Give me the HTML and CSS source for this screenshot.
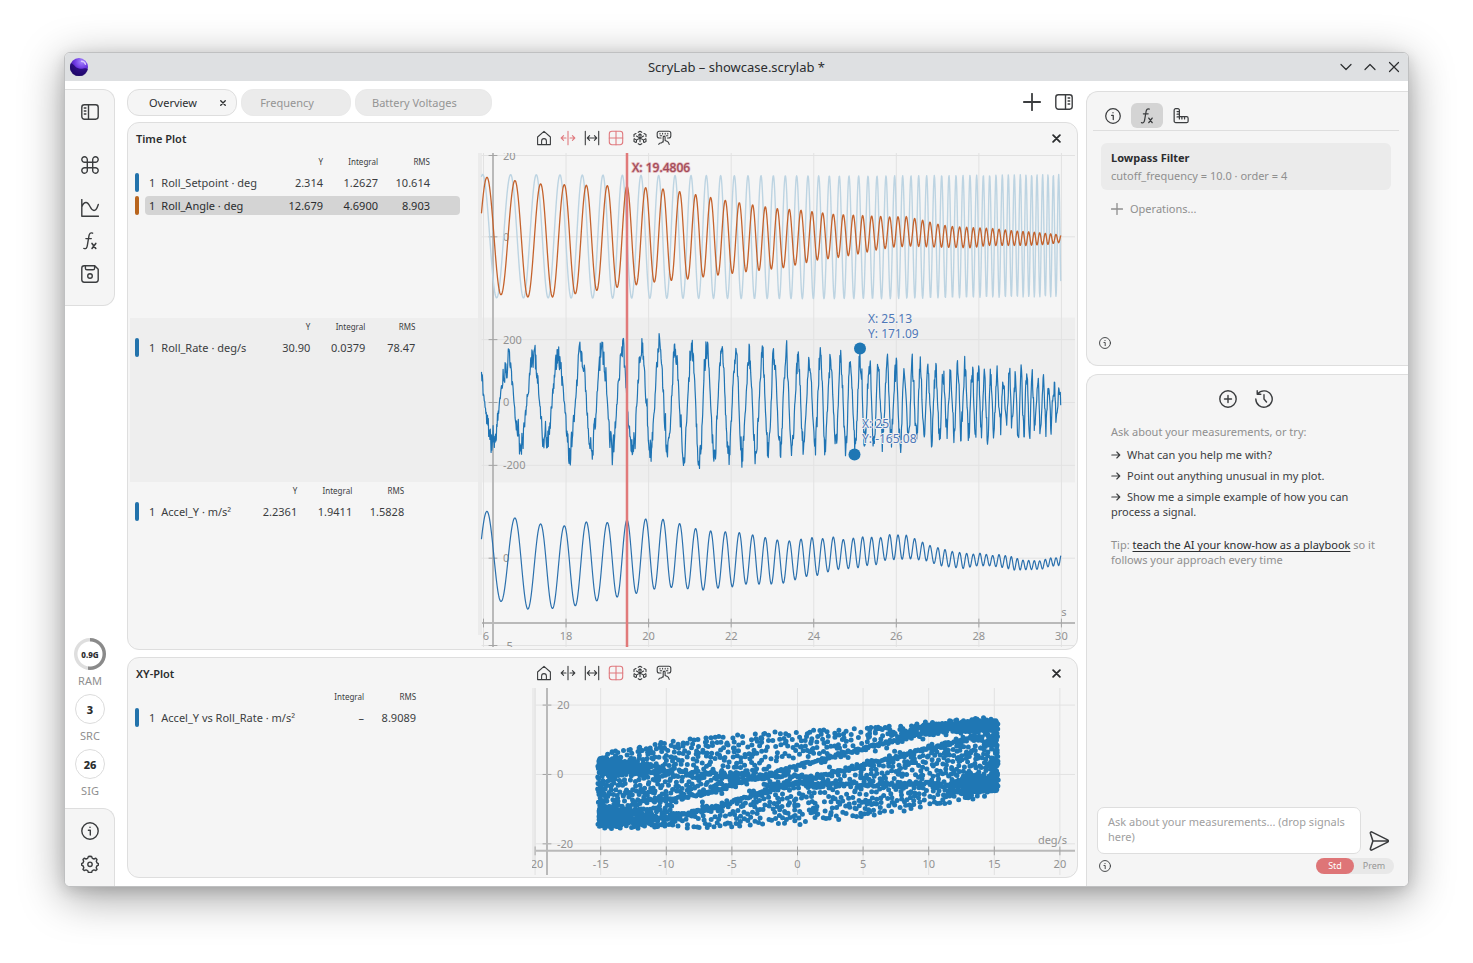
FILE: index.html
```html
<!DOCTYPE html>
<html lang="en">
<head>
<meta charset="utf-8">
<title>ScryLab – showcase.scrylab *</title>
<link rel="stylesheet" href="styles.css">
</head>
<body>
<svg class="sprite" aria-hidden="true">
  <symbol id="i-info" viewBox="0 0 18 18"><circle cx="9" cy="9" r="8.2"/><path d="M7.4 8.2H9.3V13M9 5.1v.3"/></symbol>
  <symbol id="i-fx" viewBox="0 0 18 18"><path d="M11.6 1.2C9.6.3 8.4 1.6 8 3.7L6.3 13.6C5.9 16 5 17.2 2.8 16.4M4.9 6.6h5.4"/><path class="heavy" d="M11 11.400l3.800 5M14.800 11.400l-3.800 5"/></symbol>
  <symbol id="i-close" viewBox="0 0 8 8"><path d="M1 1l6 6M7 1L1 7"/></symbol>
  <symbol id="i-home" viewBox="0 0 16 16"><path d="M1.6 7L8 1.4 14.4 7v7.6H1.6zM5.6 14.4V11a2.4 2.4 0 0 1 4.8 0v3.4"/></symbol>
  <symbol id="i-split" viewBox="0 0 16 16"><path d="M8 1.2v13.6M6 8H1.3M3.6 5.6L1.2 8l2.4 2.4M10 8h4.7M12.4 5.6L14.8 8l-2.4 2.4"/></symbol>
  <symbol id="i-width" viewBox="0 0 16 16"><path d="M1.3 1.2v13.6M14.7 1.2v13.6M3.4 8h9.2M5.6 5.7L3.3 8l2.3 2.3M10.4 5.7L12.7 8l-2.3 2.3"/></symbol>
  <symbol id="i-grid" viewBox="0 0 16 16"><rect x="1.3" y="1.3" width="13.4" height="13.4" rx="2.6"/><path d="M8 1.3v13.4M1.3 8h13.4"/></symbol>
  <symbol id="i-cube" viewBox="0 0 16 16"><path d="M6.200 2.300L8 1.300l1.800 1M12 3.500l2 1.100v2M14 9.400v2l-2 1.100M9.800 13.700L8 14.700l-1.800-1M4 12.500l-2-1.100v-2M2 6.600v-2l2-1.100M8 8V4.200M8 8l3.600-2M8 8L4.400 6M8 8v3.800M8 8l3.200 1.900M8 8l-3.200 1.900M6.500 5.200L8 3.800l1.500 1.400M2.200 8.600l2.400 1.500-.2 2M13.800 8.600l-2.400 1.500.2 2"/></symbol>
  <symbol id="i-pad" viewBox="0 0 16 16"><path d="M5 8H3.200A2 2 0 0 1 1.200 6V3.200a2 2 0 0 1 2-2h9.600a2 2 0 0 1 2 2V6a2 2 0 0 1-2 2H11.500M4 3.400v.5M6.600 3.400v.5M9.200 3.400v.5M11.800 3.400v.5M4.200 5.800h1.600M10.200 5.800h1.600M7.200 12V7.200c0-1.500 1.900-1.500 1.900 0v3.200l2.300 1c1 .4 1.400 1.600 1.800 3M7.200 11.500l-1.600 1.200c-1 .6-2.400 0-2.800 1.700"/></symbol>
  <symbol id="i-plus" viewBox="0 0 18 18"><path d="M9 .8v16.4M.8 9h16.4"/></symbol>
</svg>

<div class="window">
  <header class="titlebar">
    <svg class="logo" viewBox="0 0 18 18">
      <defs><radialGradient id="orb" cx=".65" cy=".2" r=".9"><stop offset="0" stop-color="#a684ff"/><stop offset=".45" stop-color="#6a35e0"/><stop offset="1" stop-color="#1d0660"/></radialGradient></defs>
      <circle cx="9" cy="9" r="9" fill="url(#orb)"/>
      <path d="M1 5.2C4 6 5 9.500 9 10.500s6-1.500 8.800.5A9 9 0 1 1 1 5.200z" fill="#1b0466" opacity=".75"/>
      <path d="M11.500 3.200c2 0 3.500 1.300 4 3" fill="none" stroke="#d9c8ff" stroke-width="1.400" stroke-linecap="round"/>
    </svg>
    <h1 class="window-title">ScryLab – showcase.scrylab *</h1>
    <div class="window-controls">
      <button aria-label="Minimize"><svg viewBox="0 0 12 12"><path d="M1 3.500l5 5 5-5"/></svg></button>
      <button aria-label="Maximize"><svg viewBox="0 0 12 12"><path d="M1 8.500l5-5 5 5"/></svg></button>
      <button aria-label="Close"><svg viewBox="0 0 12 12"><path d="M1.500 1.500l9 9M10.500 1.500l-9 9"/></svg></button>
    </div>
  </header>

  <div class="workspace">
    <nav class="rail">
      <div class="rail-top">
        <button class="rail-panel" aria-label="Toggle sidebar"><svg class="icon" viewBox="0 0 18 18"><rect x=".8" y="1.800" width="16.400" height="14.400" rx="2.600"/><path d="M7.500 1.800v14.400M3.300 5h1.600M3.300 8h1.600M3.300 11h1.600"/></svg></button>
        <button class="rail-command" aria-label="Commands"><svg class="icon" viewBox="0 0 18 18"><path d="M6.300 6.300H3.600A2.750 2.750 0 1 1 6.300 3.600v10.800A2.750 2.750 0 1 1 3.600 11.700h10.800A2.750 2.750 0 1 1 11.700 14.400V3.600A2.750 2.750 0 1 1 14.400 6.300z"/></svg></button>
        <button aria-label="Plots"><svg class="icon" viewBox="0 0 18 18"><path d="M.8.500v16.700h16.700M.8 8C2 4.500 3.500 3.500 5 3.500c4 0 4 8 8 8 2.200 0 3.200-2.500 4.300-6"/></svg></button>
        <button aria-label="Functions"><svg class="icon"><use href="#i-fx"/></svg></button>
        <button aria-label="Save"><svg class="icon" viewBox="0 0 18 18"><path d="M3.200.8h10.600l3.400 3.400v10.600a2.400 2.400 0 0 1-2.400 2.400H3.200a2.400 2.400 0 0 1-2.400-2.400V3.200A2.400 2.400 0 0 1 3.200.8zM4.400 1v2.200c0 1 .6 1.600 1.600 1.600h6c1 0 1.600-.6 1.600-1.600V1"/><circle cx="9" cy="11" r="2.300"/></svg></button>
      </div>
      <div class="rail-stats">
        <div class="stat"><span class="stat-ring stat-ram">0.9G</span><span class="stat-name">RAM</span></div>
        <div class="stat"><span class="stat-ring">3</span><span class="stat-name">SRC</span></div>
        <div class="stat"><span class="stat-ring">26</span><span class="stat-name">SIG</span></div>
      </div>
      <div class="rail-bottom">
        <button aria-label="About"><svg class="icon"><use href="#i-info"/></svg></button>
        <button aria-label="Settings"><svg class="icon" viewBox="0 0 18 18"><path d="M9 1.300l1.600.2.700 1.800 1.700.7 1.800-.8 1.200 1.200-.7 1.900.7 1.600 1.400.7v1.600l-1.600.8-.6 1.700.8 1.700-1.200 1.200-1.800-.7-1.700.7-.7 1.800H7.400l-.7-1.800-1.700-.7-1.800.7L2 14.400l.8-1.700-.6-1.700-1.600-.8V8.600L2 7.900l.7-1.600L2 4.400l1.200-1.200L5 4l1.700-.7.700-1.800z"/><circle cx="9" cy="9.300" r="2.200"/></svg></button>
      </div>
    </nav>

    <main class="main">
      <div class="tabs">
        <div class="tab tab-active"><button class="tab-label">Overview</button><button class="tab-close" aria-label="Close tab"><svg><use href="#i-close"/></svg></button></div>
        <div class="tab"><button class="tab-label">Frequency</button></div>
        <div class="tab"><button class="tab-label">Battery Voltages</button></div>
        <div class="tab-actions">
          <button aria-label="Add tab"><svg class="icon icon-plus"><use href="#i-plus"/></svg></button>
          <button aria-label="Toggle inspector"><svg class="icon" viewBox="0 0 18 18"><rect x=".8" y="1.800" width="16.400" height="14.400" rx="2.600"/><path d="M10.500 1.800v14.400M13.100 5h1.600M13.100 8h1.600M13.100 11h1.600"/></svg></button>
        </div>
      </div>

      <section class="panel panel-time">
        <header class="panel-head">
          <h2>Time Plot</h2>
          <div class="tools">
            <button aria-label="Home"><svg><use href="#i-home"/></svg></button>
            <button class="on" aria-label="Cursor"><svg><use href="#i-split"/></svg></button>
            <button aria-label="Fit width"><svg><use href="#i-width"/></svg></button>
            <button class="on" aria-label="Grid"><svg><use href="#i-grid"/></svg></button>
            <button aria-label="Freeze"><svg><use href="#i-cube"/></svg></button>
            <button aria-label="Inspect"><svg><use href="#i-pad"/></svg></button>
          </div>
          <button class="panel-close" aria-label="Close panel"><svg><use href="#i-close"/></svg></button>
        </header>
        <div class="panel-body">
          <div class="signals">
            <div class="signal-group">
              <table>
                <thead><tr><th></th><th></th><th></th><th class="c-y">Y</th><th class="c-int">Integral</th><th class="c-rms">RMS</th><th class="c-end"></th></tr></thead>
                <tbody>
                  <tr><td><i class="swatch"></i></td><td class="c-n">1</td><td>Roll_Setpoint · deg</td><td>2.314</td><td>1.2627</td><td>10.614</td><td></td></tr>
                  <tr class="selected"><td><i class="swatch swatch-orange"></i></td><td class="c-n">1</td><td>Roll_Angle · deg</td><td>12.679</td><td>4.6900</td><td>8.903</td><td></td></tr>
                </tbody>
              </table>
            </div>
            <div class="signal-group shaded">
              <table>
                <thead><tr><th></th><th></th><th></th><th class="c-y c-narrow">Y</th><th class="c-int">Integral</th><th class="c-rms c-tight">RMS</th></tr></thead>
                <tbody><tr><td><i class="swatch"></i></td><td class="c-n">1</td><td>Roll_Rate · deg/s</td><td>30.90</td><td>0.0379</td><td>78.47</td></tr></tbody>
              </table>
            </div>
            <div class="signal-group">
              <table>
                <thead><tr><th></th><th></th><th></th><th class="c-y">Y</th><th class="c-int">Integral</th><th class="c-rms">RMS</th></tr></thead>
                <tbody><tr><td><i class="swatch"></i></td><td class="c-n">1</td><td>Accel_Y · m/s²</td><td>2.2361</td><td>1.9411</td><td>1.5828</td></tr></tbody>
              </table>
            </div>
          </div>
          <div class="chart" id="time-chart"></div>
        </div>
      </section>

      <section class="panel panel-xy">
        <header class="panel-head">
          <h2>XY-Plot</h2>
          <div class="tools">
            <button aria-label="Home"><svg><use href="#i-home"/></svg></button>
            <button aria-label="Cursor"><svg><use href="#i-split"/></svg></button>
            <button aria-label="Fit width"><svg><use href="#i-width"/></svg></button>
            <button class="on" aria-label="Grid"><svg><use href="#i-grid"/></svg></button>
            <button aria-label="Freeze"><svg><use href="#i-cube"/></svg></button>
            <button aria-label="Inspect"><svg><use href="#i-pad"/></svg></button>
          </div>
          <button class="panel-close" aria-label="Close panel"><svg><use href="#i-close"/></svg></button>
        </header>
        <div class="panel-body">
          <div class="signals signals-wide">
            <div class="signal-group">
              <table>
                <thead><tr><th></th><th></th><th></th><th class="c-wide">Integral</th><th class="c-rms">RMS</th></tr></thead>
                <tbody><tr><td><i class="swatch"></i></td><td class="c-n">1</td><td>Accel_Y vs Roll_Rate · m/s²</td><td>–</td><td>8.9089</td></tr></tbody>
              </table>
            </div>
          </div>
          <div class="chart" id="xy-chart"></div>
        </div>
      </section>
    </main>

    <aside class="side">
      <section class="inspector">
        <div class="inspector-tabs">
          <button aria-label="Details"><svg class="icon"><use href="#i-info"/></svg></button>
          <button class="current" aria-label="Operations"><svg class="icon"><use href="#i-fx"/></svg></button>
          <button aria-label="Measure"><svg class="icon" viewBox="0 0 18 18"><path d="M3 .8h2.500A1.700 1.700 0 0 1 7.200 2.500v7.300h8.100A1.700 1.700 0 0 1 17 11.500v3.300a1.700 1.700 0 0 1-1.700 1.700H3.200A1.900 1.900 0 0 1 1.300 14.600V2.500A1.700 1.700 0 0 1 3 .8zM4.600 4H7M4.600 7H7M4.600 10h2.600M10 9.800v2.500M13 9.800v2.500M7.200 9.800v2.500"/></svg></button>
        </div>
        <div class="op-card"><h3>Lowpass Filter</h3><p>cutoff_frequency = 10.0 · order = 4</p></div>
        <button class="op-add"><svg class="icon"><use href="#i-plus"/></svg>Operations...</button>
        <button class="hint" aria-label="Help"><svg class="icon"><use href="#i-info"/></svg></button>
      </section>

      <section class="chat">
        <div class="chat-actions">
          <button aria-label="New chat"><svg class="icon" viewBox="0 0 18 18"><circle cx="9" cy="9" r="8.200"/><path d="M9 5.500v7M5.500 9h7"/></svg></button>
          <button aria-label="History"><svg class="icon" viewBox="0 0 18 18"><path d="M2.700 3.800A8.200 8.200 0 1 1 .8 9M2.200.8v3.400h3.600M9 4.800V9l2.500 3"/></svg></button>
        </div>
        <div class="chat-intro">
          <p class="muted">Ask about your measurements, or try:</p>
          <button class="prompt"><svg viewBox="0 0 10 8"><path d="M.8 4h8M5.800 1l3 3-3 3"/></svg>What can you help me with?</button>
          <button class="prompt"><svg viewBox="0 0 10 8"><path d="M.8 4h8M5.800 1l3 3-3 3"/></svg>Point out anything unusual in my plot.</button>
          <button class="prompt"><svg viewBox="0 0 10 8"><path d="M.8 4h8M5.800 1l3 3-3 3"/></svg>Show me a simple example of how you can process a signal.</button>
          <p class="muted tip">Tip: <a href="#playbook">teach the AI your know-how as a playbook</a> so it follows your approach every time</p>
        </div>
        <form class="composer">
          <textarea aria-label="Message" placeholder="Ask about your measurements... (drop signals here)"></textarea>
          <button type="button" class="send" aria-label="Send"><svg class="icon" viewBox="0 0 18 18"><path d="M1.300 2.200C1 1 1.800.5 2.800 1l14 7c.9.500.9 1.500 0 2l-14 7c-1 .5-1.800 0-1.500-1.200L3.500 9zM3.500 9H17"/></svg></button>
        </form>
        <div class="chat-foot">
          <button aria-label="Help"><svg class="icon"><use href="#i-info"/></svg></button>
          <div class="tier"><button class="tier-on">Std</button><button>Prem</button></div>
        </div>
      </section>
    </aside>
  </div>
</div>
<script src="charts.js"></script>
</body>
</html>
```
FILE: styles.css
```css
* { box-sizing: border-box; }

body {
  margin: 0;
  height: 100vh;
  min-height: 700px;
  padding: 52px 64px 76px;
  background: #fff;
  color: #3b3d3f;
  font: 11px/15px "Noto Sans", "Open Sans", sans-serif;
  overflow: hidden;
}

h1, h2, h3, p { margin: 0; font-size: inherit; }

button {
  padding: 0;
  border: 0;
  background: none;
  color: inherit;
  font: inherit;
  display: flex;
  align-items: center;
  justify-content: center;
}

svg { display: block; fill: none; stroke: currentColor; stroke-width: 1.3; stroke-linecap: round; stroke-linejoin: round; }
.sprite { position: absolute; width: 0; height: 0; }
.icon { width: 18px; height: 18px; stroke-width: 1.4; flex: none; }
.heavy { stroke-width: 1.6; }

.window {
  height: 100%;
  display: flex;
  flex-direction: column;
  background: #fff;
  border: 1px solid #bfc0c1;
  border-radius: 6px;
  overflow: hidden;
  box-shadow: 0 10px 44px rgba(0, 0, 0, .38), 0 4px 14px rgba(0, 0, 0, .12);
}

.titlebar {
  flex: none;
  height: 28px;
  display: grid;
  grid-template-columns: 1fr auto 1fr;
  align-items: center;
  padding: 0 5px;
  background: #dee0e2;
}
.logo { width: 18px; height: 18px; stroke: none; }
.window-title { font-size: 13px; line-height: 18px; font-weight: 400; color: #2b2d2f; }
.window-controls { justify-self: end; display: flex; gap: 12px; padding-right: 3px; }
.window-controls svg { width: 12px; height: 12px; stroke-width: 1.2; color: #2b2d2f; }

.workspace { flex: 1; min-height: 0; display: flex; }

.rail { width: 50px; flex: none; display: flex; flex-direction: column; padding-top: 8px; }
.rail-top, .rail-bottom { background: #f5f5f5; border: 1px solid #dedede; border-left: 0; display: flex; flex-direction: column; align-items: center; }
.rail-top { border-radius: 0 12px 12px 0; height: 217px; padding-top: 13px; }
.rail-top button + button { margin-top: 15px; }
.rail-top .rail-command { margin-top: 35px; margin-bottom: 10px; }
.rail-bottom { border-radius: 0 12px 0 0; border-bottom: 0; height: 78px; padding-top: 13px; gap: 15px; }
.rail-stats { flex: 1; display: flex; flex-direction: column; justify-content: flex-end; gap: 6px; padding-bottom: 10px; }
.stat { display: flex; flex-direction: column; align-items: center; gap: 4px; }
.stat-ring {
  width: 30px; height: 30px;
  border: 1px solid #dcdcdc;
  border-radius: 50%;
  display: flex; align-items: center; justify-content: center;
  font-weight: 800;
  color: #2b2d2f;
}
.stat-ram {
  width: 32px; height: 32px;
  margin-bottom: -1px;
  border: 0;
  font-size: 8px;
  background: radial-gradient(circle, #fff 12px, transparent 13px), conic-gradient(#8a8a8a 52%, #dedede 0);
}
.stat-name { color: #8f8f8f; }

.main { flex: 1; min-width: 0; display: flex; flex-direction: column; padding: 8px 8px 8px 12px; }

.tabs { display: flex; gap: 4px; height: 27px; margin-bottom: 6px; flex: none; }
.tab { min-width: 110px; display: flex; padding: 0 26px 0 8px; border: 1px solid #e9e9e9; border-radius: 12px; background: #ebebeb; color: #949494; }
.tab-label { flex: 1; padding: 0 8px; white-space: nowrap; }
.tab-active { background: #f5f5f5; border-color: #dedede; color: #2b2d2f; padding-right: 0; }
.tab-close { width: 26px; }
.tab-close svg { width: 6px; height: 6px; stroke-width: 1.8; }
.tab-actions { margin-left: auto; display: flex; gap: 14px; padding: 0 5px 2px 0; }
.icon-plus { stroke-width: 1.8; }

.panel { display: flex; flex-direction: column; min-height: 0; background: #f5f5f5; border: 1px solid #dedede; border-radius: 12px; overflow: hidden; }
.panel-time { flex: 529 1 0; margin-bottom: 7px; }
.panel-xy { flex: 220 1 0; }
.panel-head { flex: none; height: 30px; display: grid; grid-template-columns: 1fr auto 1fr; align-items: center; padding: 0 16px 0 8px; }
.panel-head h2 { font-weight: 600; color: #2b2d2f; }
.tools { display: flex; gap: 8px; padding-left: 10px; }
.tools svg { width: 16px; height: 16px; stroke-width: 1.1; }
.tools .on { color: #e07a7f; }
.panel-close { justify-self: end; }
.panel-close svg { width: 9px; height: 9px; stroke-width: 1.6; color: #2b2d2f; }
.panel-body { flex: 1; min-height: 0; display: flex; padding: 0 2px 2px; }
.signals { flex: none; width: 348px; display: flex; flex-direction: column; }
.signals-wide { width: 402px; }
.signal-group { flex: 1; padding: 0 5px; }
.shaded { background: #eee; }
.chart { flex: 1; min-width: 0; overflow: hidden; }

table { border-collapse: separate; border-spacing: 0 4px; }
th { height: 12px; padding: 0; font-size: 8px; line-height: 10px; font-weight: 400; text-align: right; vertical-align: top; }
td { height: 19px; padding: 0; text-align: right; white-space: nowrap; }
td:nth-child(3) { text-align: left; }
td:first-child { width: 10px; }
.c-n { width: 16px; padding-left: 4px; padding-right: 6px; }
.c-y { width: 66px; }
.c-narrow { width: 64px; }
.c-int { width: 55px; }
.c-wide { width: 69px; }
.c-rms { width: 52px; }
.c-tight { width: 50px; }
.c-end { width: 30px; }
.swatch { display: block; width: 4px; height: 19px; border-radius: 2px; background: #2272ab; }
.swatch-orange { background: #b8641d; }
.selected td { background: #d4d4d4; color: #2b2d2f; }
.selected td:first-child { background: none; }
.selected .c-n { border-radius: 4px 0 0 4px; }
.selected td:last-child { border-radius: 0 4px 4px 0; }

.side { flex: none; width: 322px; display: flex; flex-direction: column; padding-top: 10px; gap: 8px; }
.inspector, .chat { background: #f5f5f5; border: 1px solid #dedede; border-right: 0; display: flex; flex-direction: column; }
.inspector { height: 275px; border-radius: 12px 0 0 12px; padding: 11px 9px 16px 6px; align-items: flex-start; }
.inspector-tabs { align-self: stretch; display: flex; gap: 2px; padding-left: 4px; height: 28px; border-bottom: 1px solid #dedede; }
.inspector-tabs button { width: 32px; height: 25px; border-radius: 6px; }
.inspector-tabs .icon { width: 16px; height: 16px; }
.inspector-tabs .current { background: #d4d4d4; }
.op-card { align-self: stretch; margin: 12px 8px 0; padding: 7px 10px; height: 47px; border-radius: 6px; background: #ebebeb; }
.op-card h3 { color: #2b2d2f; font-weight: 700; margin-bottom: 3px; }
.op-card p { color: #8f8f8f; }
.op-add { margin: 11px 0 0 18px; gap: 7px; color: #8f8f8f; }
.op-add .icon { width: 12px; height: 12px; stroke-width: 2; }
.hint { margin: auto 0 0 6px; }
.hint .icon, .chat-foot .icon { width: 12px; height: 12px; }

.chat { flex: 1; min-height: 0; border-bottom: 0; border-radius: 12px 0 0 0; padding: 15px 14px 12px 10px; }
.chat-actions { display: flex; justify-content: center; gap: 18px; }
.chat-intro { display: flex; flex-direction: column; gap: 6px; padding: 16px 18px 0 14px; }
.chat-intro .muted + .prompt { margin-top: 2px; }
.muted { color: #8f8f8f; }
.prompt { display: block; text-align: left; }
.prompt svg { display: inline-block; width: 10px; height: 8px; margin-right: 6px; stroke-width: 1.1; }
.tip { margin-top: 12px; }
.tip a { color: #2b2d2f; text-underline-offset: 2px; text-decoration-skip-ink: none; }
.composer { margin-top: auto; display: flex; align-items: flex-end; gap: 8px; padding-right: 5px; }
textarea { flex: 1; min-width: 0; height: 47px; resize: none; padding: 6px 10px; border: 1px solid #dedede; border-radius: 7px; background: #fff; color: #2b2d2f; font: inherit; overflow: hidden; }
textarea::placeholder { color: #a0a0a0; opacity: 1; }
.send { height: 26px; }
.send .icon { width: 20px; height: 20px; }
.chat-foot { display: flex; align-items: center; justify-content: space-between; padding: 4px 0 0 2px; }
.tier { display: flex; height: 16px; border-radius: 8px; background: #e8e8e8; color: #969696; font-size: 9px; line-height: 12px; }
.tier button { width: 40px; }
.tier .tier-on { width: 38px; border-radius: 8px; background: #de7577; color: #fff; }

.grid { stroke: #e2e2e2; stroke-width: 1; }
.axis { stroke: #b9b9b9; stroke-width: 2; stroke-linecap: butt; }
.axis-thin { stroke: #a4a4a4; stroke-width: 1; }
.tick { fill: #929292; stroke: none; font-size: 11px; }
.tick-mid { text-anchor: middle; }
.tick-end { text-anchor: end; }
.band { fill: #eee; stroke: none; }
.gutter { fill: #ebebeb; stroke: none; }
.trace { stroke: #2b70ad; stroke-width: 1.2; }
.trace-rate { stroke: #1f74b4; stroke-width: 1.2; }
.trace-set { stroke: #bdd4e2; stroke-width: 1.4; }
.trace-angle { stroke: #c4622c; stroke-width: 1.3; }
.cursor { stroke: #e17a7a; stroke-width: 2.5; }
.cursor-label { fill: #a04a58; stroke: #e3b0b4; stroke-width: 1.5; paint-order: stroke; font-size: 12px; font-weight: 500; }
.mark { fill: #1f77b4; stroke: none; }
.mark-label { fill: #4f78b8; stroke: #f2f2f2; stroke-width: 2; paint-order: stroke; font-size: 12px; }
.cloud { stroke: #1f77b4; stroke-width: 5; }
```
FILE: charts.js
```js
const NS = 'http://www.w3.org/2000/svg';

function random(seed) {
  return () => {
    seed = (seed * 1664525 + 1013904223) % 4294967296;
    return seed / 4294967296;
  };
}

function surface(host, baseW, baseH) {
  host.textContent = '';
  const w = host.clientWidth, h = host.clientHeight;
  const svg = document.createElementNS(NS, 'svg');
  svg.setAttribute('width', w);
  svg.setAttribute('height', h);
  host.append(svg);
  const add = (tag, cls, attrs, text) => {
    const el = document.createElementNS(NS, tag);
    el.setAttribute('class', cls);
    for (const k in attrs) el.setAttribute(k, attrs[k]);
    if (text !== undefined) el.textContent = text;
    svg.append(el);
  };
  const X = v => v * w / baseW, Y = v => v * h / baseH;
  return {
    w, h, X, Y, add,
    line: (cls, x1, y1, x2, y2) => add('line', cls, { x1, y1, x2, y2 }),
    text: (cls, x, y, t) => add('text', cls, { x, y }, t)
  };
}

function lerp(points, x) {
  if (x <= points[0][0]) return points[0][1];
  for (let i = 1; i < points.length; i++) {
    const [x0, y0] = points[i - 1], [x1, y1] = points[i];
    if (x <= x1) return y0 + (y1 - y0) * (x - x0) / (x1 - x0);
  }
  return points[points.length - 1][1];
}

/* Oscillation whose crests sit at the given x values: its middle, reach and phase at x. */
function wave(peaks, top, bottom, x) {
  let i = 0;
  while (i < peaks.length - 2 && peaks[i + 1] < x) i++;
  const phase = (x - peaks[i]) / (peaks[i + 1] - peaks[i]);
  const hi = lerp(top, x), lo = lerp(bottom, x);
  return { mid: (hi + lo) / 2, reach: (hi - lo) / 2, cos: Math.cos(phase * 2 * Math.PI) };
}

const third = (list, off) => list.map(v => v / 3 + off);
const pairs = (list, off, dy) => {
  const out = [];
  for (let i = 0; i < list.length; i += 2) out.push([list[i] / 3 + off, list[i + 1] / 3 + dy]);
  return out;
};

const setPeaks = [...third([-50, 38, 122, 199, 270, 337, 399, 457, 513, 566, 615, 663, 709, 752, 793, 834, 873, 910], -8),
  ...third([16, 50, 84, 116, 148, 178, 207, 236, 264, 291, 318, 344, 368, 393, 416, 440, 463, 485, 507, 528, 549, 570, 590, 610, 629, 648, 667, 685, 703, 721, 738, 755, 771, 788, 804, 820, 836, 852], 302)];
const anglePeaks = [...third([-38, 51, 135, 212, 283, 349, 412, 471, 527, 579, 629, 677, 722, 766, 808, 848, 886, 922], -8),
  ...third([28, 63, 96, 128, 160, 190, 220, 248, 275, 302, 329, 354, 379, 404, 428, 450, 474, 495, 517, 539, 560, 580, 600, 619, 638, 657, 676, 694, 712, 729, 746, 763, 779, 796, 812, 828, 844, 860], 302)];
const ratePeaks = [...third([-65, 22, 112, 190, 265, 333, 396, 457, 515, 568, 616, 665, 711, 755, 797, 837, 877, 912], -8),
  ...third([18, 54, 88, 121, 151, 183, 211, 240, 268, 295, 321, 347, 374, 397, 421, 443, 467, 490, 512, 533, 555, 577, 595, 613, 632, 651, 670, 688, 706, 723, 740, 757, 773, 790, 806, 822, 838, 854], 302)];

const setTop = [[0, 21.500], [200, 22.500], [400, 23], [580, 21.500]];
const setBottom = [[0, 145], [300, 146], [400, 146], [580, 144]];
const angleTop = [...pairs([51, 172, 135, 182, 212, 192, 349, 196, 471, 198, 527, 203, 579, 207, 629, 215, 677, 224, 766, 241, 848, 255, 922, 266], -8, -33),
  ...pairs([63, 271, 160, 283, 248, 287, 329, 291, 379, 290, 428, 301, 474, 313, 517, 320, 638, 326, 694, 332, 763, 337, 842, 345], 302, -33)];
const angleBottom = [...pairs([94, 525, 173, 532, 248, 532, 317, 522, 381, 512, 441, 503, 499, 495, 553, 487, 653, 478, 744, 466, 828, 456, 905, 448], -8, -33),
  ...pairs([12, 444, 46, 436, 112, 421, 175, 413, 233, 403, 288, 391, 342, 382, 391, 379, 460, 382, 570, 384, 628, 377, 738, 377, 803, 374, 840, 368], 302, -33)];
const accelTop = [...pairs([51, 396, 135, 416, 212, 434, 283, 440, 349, 428, 412, 430, 471, 422, 527, 419, 579, 420, 629, 433, 677, 448, 722, 455, 808, 460, 848, 467, 922, 482], -8, 227),
  ...pairs([28, 485, 96, 475, 128, 478, 160, 473, 190, 481, 248, 473, 302, 475, 329, 466, 379, 468, 404, 478, 450, 499, 517, 517, 580, 525, 600, 522, 638, 529, 657, 526, 694, 532, 729, 543, 779, 545, 812, 536, 828, 536, 842, 526], 302, 227)];
const accelBottom = [...pairs([94, 667, 173, 690, 248, 688, 317, 680, 381, 665, 441, 654, 499, 643, 553, 630, 604, 625, 700, 633, 744, 627, 787, 623, 828, 615, 905, 615], -8, 227),
  ...pairs([12, 612, 46, 602, 80, 592, 112, 589, 144, 578, 175, 571, 233, 566, 261, 559, 288, 557, 316, 543, 391, 539, 439, 545, 483, 560, 549, 568, 590, 560, 628, 560, 668, 565, 703, 573, 787, 570, 803, 563, 835, 559], 302, 227)];
const rateTop = [...pairs([25, 735, 110, 725, 190, 705, 265, 708, 333, 690, 396, 700, 457, 692, 515, 690, 568, 678, 616, 695, 711, 680, 755, 687, 837, 708, 912, 708], -8, -33),
  ...pairs([18, 715, 88, 712, 151, 704, 184, 720, 240, 718, 295, 743, 347, 725, 397, 745, 443, 755, 512, 762, 555, 745, 577, 762, 635, 770, 740, 768, 838, 784], 302, -33)];
const rateBottom = [...pairs([72, 182, 155, 200, 230, 205, 302, 210, 428, 210, 487, 220, 538, 215, 594, 220, 640, 240, 691, 240, 735, 218, 776, 230, 857, 218, 927, 218], -8, 227),
  ...pairs([2, 220, 71, 210, 139, 205, 197, 200, 253, 188, 386, 188, 434, 168, 520, 155, 632, 155, 716, 157, 785, 148, 820, 138, 838, 120], 302, 227)];

function drawTime() {
  const s = surface(document.getElementById('time-chart'), 597, 495);
  const { X, Y, w, h } = s;
  s.add('rect', 'band', { x: 0, y: Y(165), width: w, height: Y(165) });
  s.add('rect', 'gutter', { x: 0, y: 0, width: 4, height: Y(483) });
  for (let t = 16; t <= 30; t += 2) s.line('grid', X(5.500 + (t - 16) * 41.280), 0, X(5.500 + (t - 16) * 41.280), h);
  const rows = [[2.500, '20'], [84, '0'], [187, '200'], [250, '0'], [313, '-200'], [406, '0'], [493.500, '-5']];
  rows.forEach(([y]) => s.line('grid', 4, Y(y), w, Y(y)));
  s.line('axis', X(15), 0, X(15), h);
  rows.forEach(([y, label]) => {
    s.line('axis-thin', X(15) - 4, Y(y), X(15) + 4, Y(y));
    s.text('tick', X(15) + 10, Y(y) + 4, label);
  });
  s.line('axis', 4, Y(471), w, Y(471));
  for (let t = 16; t <= 30; t += 2) {
    const x = X(5.500 + (t - 16) * 41.280);
    s.line('axis-thin', x, Y(471) - 4, x, Y(471) + 4);
    s.text('tick tick-mid', t === 16 ? 8 : x, Y(488), t === 16 ? '6' : t);
  }
  s.text('tick tick-mid', X(586), Y(464), 's');

  const noise = random(7);
  let drift = 0;
  const trace = (cls, peaks, top, bottom, jitter) => {
    let d = '';
    for (let x = 3.500; x <= 583; x += .4) {
      const p = wave(peaks, top, bottom, x);
      let y = p.mid + p.reach * p.cos;
      if (jitter) {
        drift = drift * .3 + (noise() - .5) * jitter * (.35 + .8 * Math.abs(p.cos));
        if (noise() > .95) drift += (noise() - .5) * jitter * 1.300;
        y += drift;
      }
      d += (d ? 'L' : 'M') + X(x).toFixed(1) + ' ' + Y(y).toFixed(1);
    }
    s.add('path', cls, { d });
  };
  trace('trace-set', setPeaks, setTop, setBottom, 0);
  trace('trace-angle', anglePeaks, angleTop, angleBottom, 0);
  trace('trace-rate', ratePeaks, rateTop, rateBottom, 24);
  trace('trace', anglePeaks, accelTop, accelBottom, 0);

  s.line('cursor', X(149), 0, X(149), h);
  s.text('cursor-label', X(149) + 5, Y(19), 'X: 19.4806');
  s.add('circle', 'mark', { cx: X(382), cy: Y(196), r: 6 });
  s.add('circle', 'mark', { cx: X(376.500), cy: Y(302), r: 6 });
  s.text('mark-label', X(390), Y(170), 'X: 25.13');
  s.text('mark-label', X(390), Y(170) + 15, 'Y: 171.09');
  s.text('mark-label', X(384), Y(276), 'X: 25');
  s.text('mark-label', X(384), Y(276) + 15, 'Y: -165.08');
}

function drawXY() {
  const s = surface(document.getElementById('xy-chart'), 543, 186);
  const { X, Y, w, h } = s;
  s.add('rect', 'gutter', { x: 0, y: 0, width: 4, height: Y(172) });
  const px = v => X(265.500 + v * 13.120);
  for (let v = -20; v <= 20; v += 5) s.line('grid', px(v), 0, px(v), h);
  [[17, 20], [86, 0], [155, -20]].forEach(([y, v]) => {
    s.line('grid', 4, Y(y), w, Y(y));
    s.line('axis-thin', X(15) - 4, Y(y), X(15) + 4, Y(y));
    s.text('tick', X(15) + 10, Y(y) + 4, v);
  });
  s.line('axis', X(15), 0, X(15), h);
  s.line('axis', 4, Y(162), w, Y(162));
  for (let v = -20; v <= 20; v += 5) {
    s.line('axis-thin', px(v), Y(162) - 4, px(v), Y(162) + 4);
    s.text('tick tick-mid', v === -20 ? 5 : px(v), Y(179), v === -20 ? '20' : v);
  }
  s.text('tick tick-end', X(535), Y(155), 'deg/s');

  const top = [[65, 69], [80, 63], [128, 54], [168, 49], [268, 42], [318, 40], [388, 34], [455, 29], [467, 33]];
  const bottom = [[65, 136], [70, 140], [168, 139], [268, 136], [368, 123], [428, 114], [456, 108], [467, 98]];
  const gap = [[140, 120], [180, 111], [233, 95], [260, 88], [305, 75], [348, 64], [388, 54], [440, 41]];
  const upperGap = [[170, 94], [230, 79], [278, 70], [311, 64], [350, 52]];
  const rand = random(21);
  const dots = [];
  const clear = (x, y, gapSize) => dots.every(p => (p[0] - x) ** 2 + (p[1] - y) ** 2 > gapSize);
  for (let i = 0; i < 5200; i++) {
    const x = 266 + 199 * Math.sin(rand() * Math.PI * 2) + (rand() - .5) * 3;
    const t = lerp(top, x), b = lerp(bottom, x);
    const y = t + (b - t) * rand();
    const inGap = x > 140 && x < 430 && Math.abs(y - lerp(gap, x)) < 5;
    const inUpper = x > 240 && x < 340 && Math.abs(y - lerp(upperGap, x)) < 3;
    if ((inGap || inUpper) && rand() > .09) continue;
    if (clear(x, y, 13) || rand() < .12) dots.push([x, y]);
  }
  /* Slow sweeps leave solid strands on both sides of the gap. */
  for (let x = 110; x < 450; x += 2) {
    const g = lerp(gap, x);
    dots.push([x, g + 7 + rand() * 3], [x, g - 7 - rand() * 3]);
    if (x < 320) dots.push([x - 40, 80 + (x - 110) * .03 + rand() * 6]);
    if (x > 230) dots.push([x, 93 + rand() * 6]);
  }
  for (let i = 0; i < 330; i++) {
    const u = rand() * rand();
    dots.push([67 + u * 80, 120 + rand() * 18]);
    dots.push([67 + u * 60, 70 + rand() * 10 + u * 6]);
    dots.push([465 - u * 130, 32 + rand() * 10 + u * 8]);
    dots.push([465 - u * 50, 88 + rand() * 14 + u * 5]);
  }
  const d = dots.map(([x, y]) => 'M' + X(x).toFixed(1) + ' ' + Y(y).toFixed(1) + 'h0').join('');
  s.add('path', 'cloud', { d });
}

function draw() { drawTime(); drawXY(); }
window.addEventListener('resize', draw);
draw();
```
